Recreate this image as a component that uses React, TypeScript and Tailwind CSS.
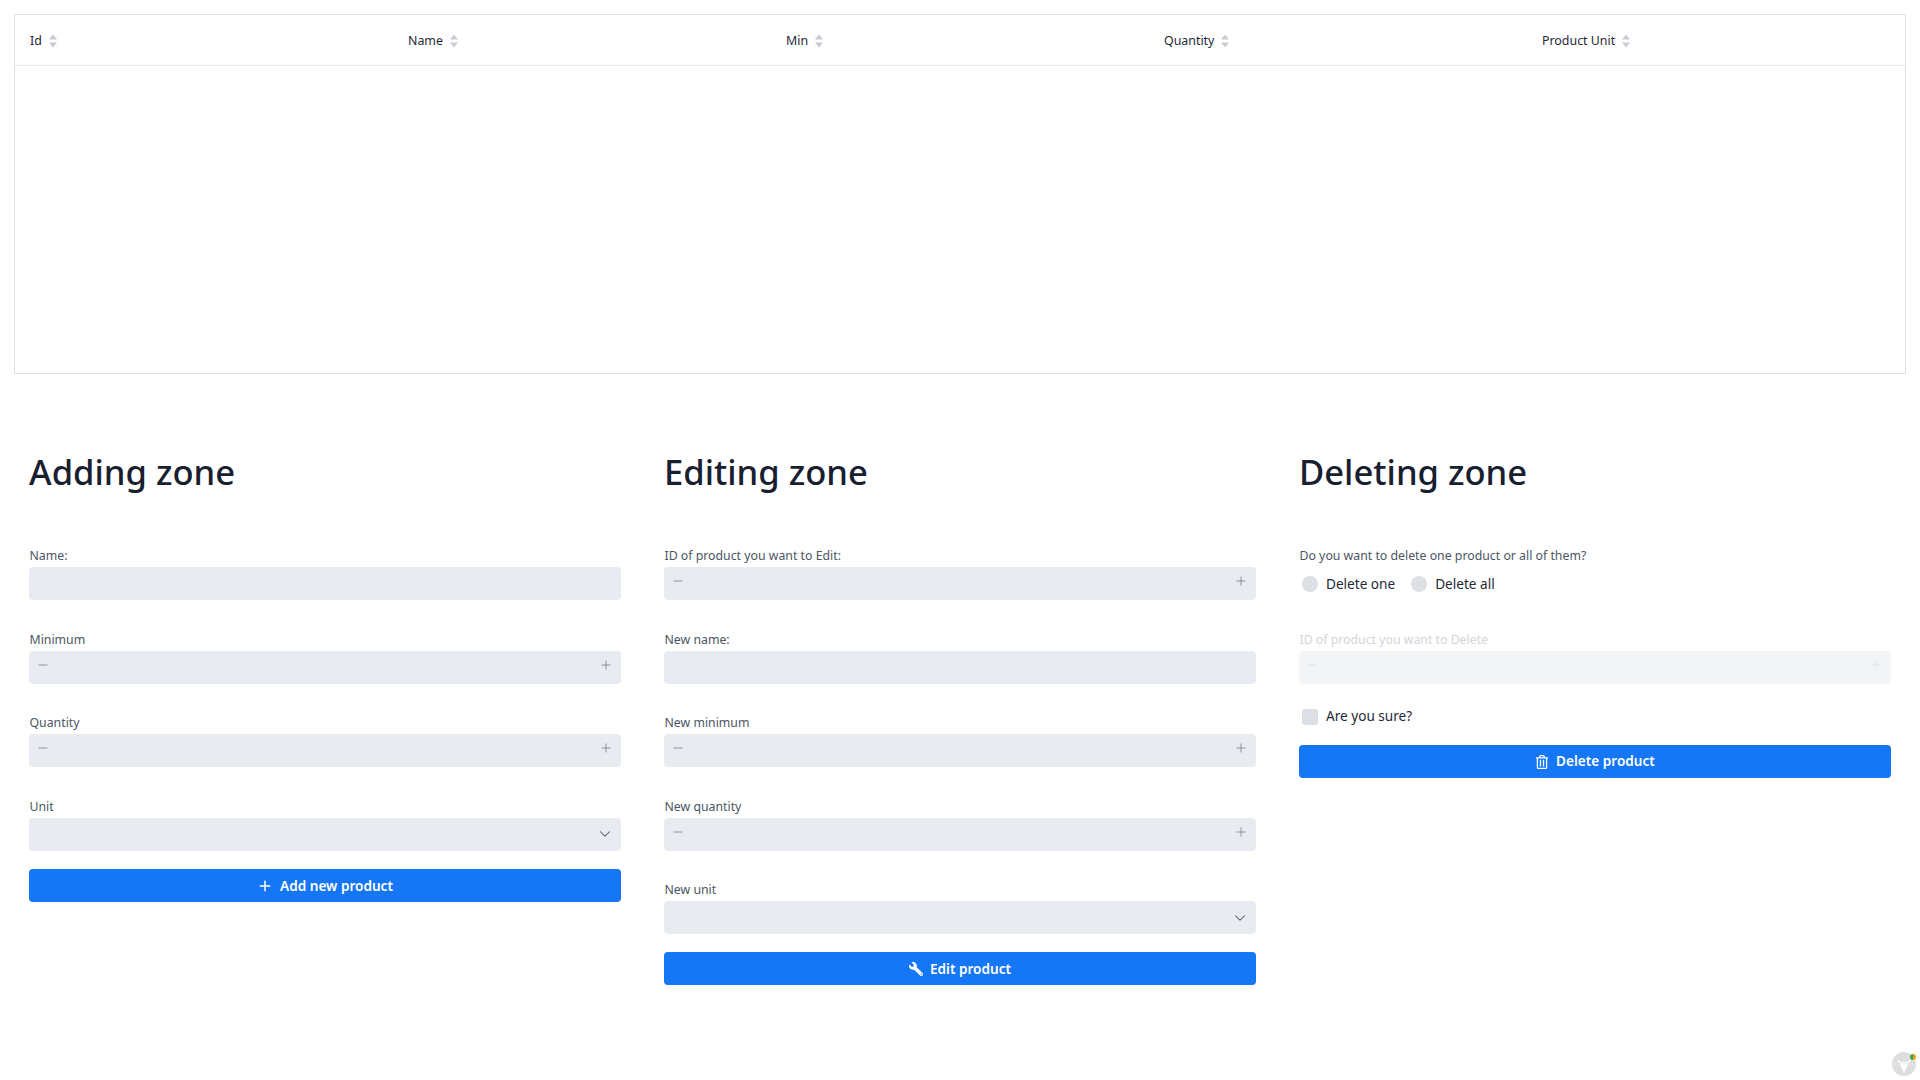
import { ChevronDown, Minus, Plus } from "lucide-react"
import { FaRegTrashAlt, FaWrench } from "react-icons/fa"
import type { ReactNode } from "react"

const columns = ["Id", "Name", "Min", "Quantity", "Product Unit"]

function SortIcon() {
  return (
    <svg width="8" height="14" viewBox="0 0 8 14" className="ml-[7px] text-[#c9ccd3]" fill="currentColor">
      <path d="M4 0.5 L8 5.5 H0 Z" />
      <path d="M4 13.5 L8 8.5 H0 Z" />
    </svg>
  )
}

function ProductTable() {
  return (
    <div className="mx-[14px] mt-[14px] h-[360px] border border-[#dfe1e7]">
      <table className="w-full table-fixed border-collapse">
        <thead>
          <tr className="h-[50px] border-b border-[#e8eaee]">
            {columns.map(col => (
              <th key={col} className="px-[15px] pt-[3px] text-left text-[12.4px] font-normal text-[#1f2937]">
                <span className="flex items-center">
                  {col}
                  <SortIcon />
                </span>
              </th>
            ))}
          </tr>
        </thead>
      </table>
    </div>
  )
}

function Label({ children, disabled }: { children: ReactNode; disabled?: boolean }) {
  return (
    <label className={`block h-[20px] pl-[0.5px] text-[12.3px] leading-[18px] ${disabled ? "text-[#d1d5db]" : "text-[#4b5563]"}`}>
      {children}
    </label>
  )
}

function TextField({ label }: { label: string }) {
  return (
    <div className="mb-[30.6px]">
      <Label>{label}</Label>
      <input className="block h-[33px] w-full rounded-[4px] bg-[#e8ebef] outline-none" />
    </div>
  )
}

function NumberField({ label, disabled }: { label: string; disabled?: boolean }) {
  return (
    <div className="mb-[30.6px]">
      <Label disabled={disabled}>{label}</Label>
      <div className={`flex h-[33px] items-start justify-between rounded-[4px] pl-[7px] pr-[8px] pt-[7px] ${disabled ? "bg-[#f3f4f6] text-[#d8dbe0]" : "bg-[#e8ebef] text-[#6b7280]"}`}>
        <Minus size={14} strokeWidth={1.25} />
        <Plus size={14} strokeWidth={1.25} />
      </div>
    </div>
  )
}

function SelectField({ label }: { label: string }) {
  return (
    <div className="mb-[18px]">
      <Label>{label}</Label>
      <div className="flex h-[33px] items-center justify-end rounded-[4px] bg-[#e8ebef] pr-[7px] text-[#4b5563]">
        <ChevronDown size={18} strokeWidth={1.4} />
      </div>
    </div>
  )
}

function ActionButton({ icon, children }: { icon: ReactNode; children: ReactNode }) {
  return (
    <button className="flex h-[33px] w-full items-center justify-center gap-[7px] rounded-[4px] bg-[#1677f6] pt-[1px] text-[13.6px] font-semibold text-white">
      {icon}
      {children}
    </button>
  )
}

function Zone({ title, children }: { title: string; children: ReactNode }) {
  return (
    <section>
      <h2 className="mb-[50px] h-[50px] text-[34.6px] font-medium leading-[50px] text-[#182030]">{title}</h2>
      {children}
    </section>
  )
}

function Radio({ label }: { label: string }) {
  return (
    <span className="flex items-center text-[13.6px] text-[#1f2937]">
      <span className="ml-[3px] mr-[8px] h-[16px] w-[16px] rounded-full bg-[#dcdfe4]" />
      {label}
    </span>
  )
}

function CornerBadge() {
  return (
    <div className="fixed bottom-[4px] right-[4px] h-[24px] w-[24px] rounded-full bg-[#dedede]">
      <svg viewBox="0 0 24 24" className="h-full w-full" fill="none" stroke="#fff" strokeWidth="1.5">
        <path d="M6 8 C7 11 9 11 12 11 C15 11 17 11 18 8" />
        <path d="M9 13 L12 19 L15 13 Z" fill="#fff" />
      </svg>
      <span className="absolute right-[0px] top-[2px] h-[6px] w-[6px] rounded-full bg-[linear-gradient(90deg,#34a853_50%,#f59e0b_50%)]" />
    </div>
  )
}

export default function App() {
  return (
    <div className="relative h-[1080px] overflow-hidden bg-white font-['Noto_Sans',sans-serif]">
      <ProductTable />

      <div className="mt-[73px] grid grid-cols-3 gap-x-[43px] px-[29px]">
        <Zone title="Adding zone">
          <TextField label="Name:" />
          <NumberField label="Minimum" />
          <NumberField label="Quantity" />
          <SelectField label="Unit" />
          <ActionButton icon={<Plus size={16} strokeWidth={2.25} />}>Add new product</ActionButton>
        </Zone>

        <Zone title="Editing zone">
          <NumberField label="ID of product you want to Edit:" />
          <TextField label="New name:" />
          <NumberField label="New minimum" />
          <NumberField label="New quantity" />
          <SelectField label="New unit" />
          <ActionButton icon={<FaWrench size={14} className="-scale-x-100" />}>Edit product</ActionButton>
        </Zone>

        <Zone title="Deleting zone">
          <Label>Do you want to delete one product or all of them?</Label>
          <div className="mb-[39px] mt-[9px] flex h-[16px] gap-[13px]">
            <Radio label="Delete one" />
            <Radio label="Delete all" />
          </div>
          <NumberField label="ID of product you want to Delete" disabled />
          <div className="mb-[20px] -mt-[6px] flex h-[16px] items-center text-[13.6px] text-[#1f2937]">
            <span className="ml-[3px] mr-[8px] h-[16px] w-[16px] rounded-[3px] bg-[#dcdfe4]" />
            Are you sure?
          </div>
          <ActionButton icon={<FaRegTrashAlt size={14} />}>Delete product</ActionButton>
        </Zone>
      </div>

      <CornerBadge />
    </div>
  )
}
